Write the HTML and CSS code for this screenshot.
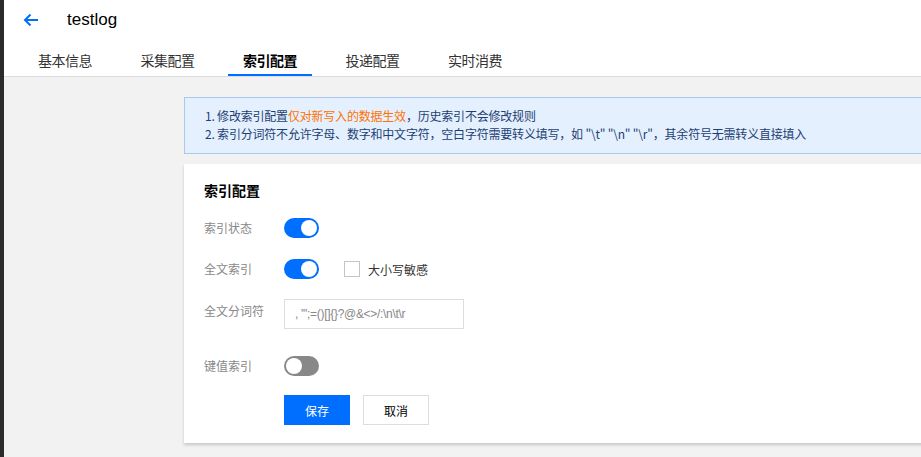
FILE: index.html
```html
<!DOCTYPE html>
<html lang="zh-CN">
<head>
<meta charset="utf-8">
<title>testlog</title>
<link rel="stylesheet" href="styles.css">
</head>
<body>
<div class="shell">
  <div class="edge"></div>
  <div class="main">
    <header class="header">
      <div class="title-row">
        <svg class="back" width="16" height="14" viewBox="0 0 16 14"><path d="M15 7H2M7.5 1.5L2 7l5.5 5.5" fill="none" stroke="#006eff" stroke-width="2"/></svg>
        <span class="title">testlog</span>
      </div>
      <nav class="tabs">
        <span class="tab">基本信息</span>
        <span class="tab">采集配置</span>
        <span class="tab active">索引配置</span>
        <span class="tab">投递配置</span>
        <span class="tab">实时消费</span>
      </nav>
    </header>
    <section class="content">
      <div class="notice">
        <p>1. 修改索引配置<span class="warn">仅对新写入的数据生效</span>，历史索引不会修改规则</p>
        <p>2. 索引分词符不允许字母、数字和中文字符，空白字符需要转义填写，如 "\t" "\n" "\r"，其余符号无需转义直接填入</p>
      </div>
      <div class="card">
        <h3 class="card-title">索引配置</h3>
        <div class="row r1">
          <span class="label">索引状态</span>
          <span class="switch on"><span class="knob"></span></span>
        </div>
        <div class="row r2">
          <span class="label">全文索引</span>
          <span class="switch on"><span class="knob"></span></span>
          <span class="check"><span class="box"></span>大小写敏感</span>
        </div>
        <div class="row r3">
          <span class="label">全文分词符</span>
          <span class="input">, '";=()[]{}?@&amp;&lt;&gt;/:\n\t\r</span>
        </div>
        <div class="row r4">
          <span class="label">键值索引</span>
          <span class="switch off"><span class="knob"></span></span>
        </div>
        <div class="row r5">
          <span class="label"></span>
          <button class="btn primary">保存</button>
          <button class="btn">取消</button>
        </div>
      </div>
    </section>
  </div>
</div>
</body>
</html>
```

FILE: styles.css
```css
html, body {
  margin: 0;
  padding: 0;
  height: 100%;
  overflow: hidden;
}
body {
  font-family: "Noto Sans CJK SC", "Liberation Sans", sans-serif;
  font-size: 12px;
  color: #000;
  background: #f2f2f2;
}
.shell {
  display: flex;
  height: 100%;
}
.edge {
  width: 4px;
  flex: none;
  background: #2b2b2b;
}
.main {
  flex: 1;
  min-width: 0;
  display: flex;
  flex-direction: column;
}
.header {
  background: #fff;
  border-bottom: 1px solid #dddddd;
}
.title-row {
  height: 40px;
  display: flex;
  align-items: center;
  padding-left: 19px;
}
.back {
  display: block;
}
.title {
  margin-left: 28px;
  font-family: "Liberation Sans", Arial, sans-serif;
  font-size: 17px;
  color: #000;
}
.tabs {
  display: flex;
  padding-left: 19px;
  height: 36px;
}
.tab {
  padding: 10px 15px 4px;
  margin-right: 18.5px;
  font-size: 14px;
  line-height: 20px;
  letter-spacing: -0.5px;
  color: #333;
  border-bottom: 2px solid transparent;
}
.tab.active {
  color: #000;
  font-weight: bold;
  border-bottom-color: #006eff;
}
.content {
  padding: 20px 0 0 180px;
}
.notice {
  margin-right: -40px;
  background: #e5f0ff;
  border: 1px solid #a9c8ef;
  padding: 9px 20px 10px;
  color: #1d3f72;
  line-height: 18px;
  letter-spacing: -0.2px;
}
.notice p {
  margin: 0;
}
.warn {
  color: #ff7200;
}
.card {
  margin-top: 10px;
  margin-right: -40px;
  background: #fff;
  box-shadow: 0 2px 3px rgba(0, 0, 0, 0.18);
  padding: 16px 20px 20px;
  height: 279px;
  box-sizing: border-box;
}
.card-title {
  margin: 0;
  font-size: 14px;
  line-height: 20px;
  font-weight: bold;
}
.row {
  display: flex;
  align-items: center;
}
.r1 { margin-top: 18px; }
.r2 { margin-top: 21px; }
.r3 { margin-top: 20px; }
.r4 { margin-top: 27px; }
.r5 { margin-top: 19px; }
.label {
  width: 80px;
  flex: none;
  color: #888;
  line-height: 20px;
}
.r3 .label {
  align-self: flex-start;
  padding-top: 2px;
}
.switch {
  width: 35px;
  height: 20px;
  border-radius: 10px;
  box-sizing: border-box;
  padding: 2px;
  display: flex;
}
.switch.on {
  background: #006eff;
  justify-content: flex-end;
}
.switch.off {
  background: #888;
  justify-content: flex-start;
}
.knob {
  width: 16px;
  height: 16px;
  border-radius: 50%;
  background: #fff;
}
.check {
  display: flex;
  align-items: center;
  margin-left: 25px;
  color: #333;
}
.box {
  width: 16px;
  height: 16px;
  box-sizing: border-box;
  border: 1px solid #c5c5c5;
  background: #fff;
  margin-right: 8px;
}
.input {
  width: 180px;
  height: 30px;
  box-sizing: border-box;
  border: 1px solid #dddddd;
  padding: 0 10px;
  line-height: 28px;
  color: #888;
  font-family: "Liberation Sans", Arial, sans-serif;
  letter-spacing: -0.3px;
}
.btn {
  width: 66px;
  height: 30px;
  margin-right: 13px;
  border: 1px solid #dddddd;
  background: #fff;
  color: #000;
  font-family: "Noto Sans CJK SC", sans-serif;
  font-size: 12px;
  padding: 0;
}
.btn.primary {
  background: #006eff;
  border-color: #006eff;
  color: #fff;
}
```
